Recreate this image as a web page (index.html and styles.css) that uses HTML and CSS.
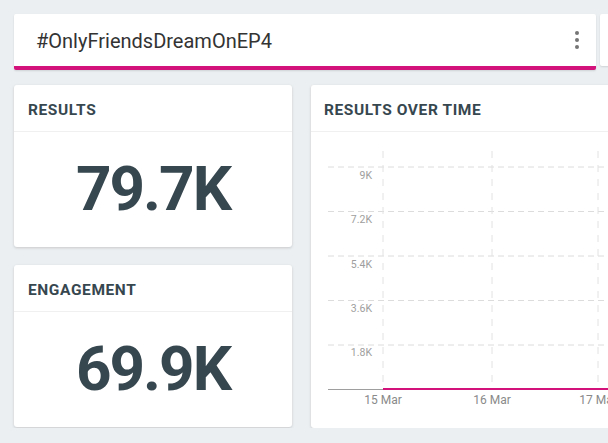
FILE: index.html
```html
<!DOCTYPE html>
<html>
    <head>
        <title>Hashtag Dashboard</title>
        <meta charset="UTF-8">
        <meta name="viewport" content="width=device-width, initial-scale=1.0">
        <link rel="stylesheet" href="styles.css">
    </head>
    <body>
        <div class="page">
            <div class="tabs">
                <div class="tab active">
                    <span class="tab-title">#OnlyFriendsDreamOnEP4</span>
                    <span class="kebab"><i></i><i></i><i></i></span>
                </div>
                <div class="tab"></div>
            </div>

            <div class="board">
                <div class="stats">
                    <div class="card">
                        <div class="card-head">RESULTS</div>
                        <div class="big-number">79.7K</div>
                    </div>
                    <div class="card">
                        <div class="card-head">ENGAGEMENT</div>
                        <div class="big-number">69.9K</div>
                    </div>
                </div>

                <div class="card chart-card">
                    <div class="card-head">RESULTS OVER TIME</div>
                    <svg class="chart" width="320" height="295" viewBox="0 0 320 295">
                        <!-- horizontal grid -->
                        <g class="grid">
                            <line x1="17" y1="35" x2="320" y2="35"/>
                            <line x1="17" y1="79.5" x2="320" y2="79.5"/>
                            <line x1="17" y1="124" x2="320" y2="124"/>
                            <line x1="17" y1="168.5" x2="320" y2="168.5"/>
                            <line x1="17" y1="213" x2="320" y2="213"/>
                        </g>
                        <!-- vertical grid -->
                        <g class="grid vertical">
                            <line x1="72" y1="19" x2="72" y2="257"/>
                            <line x1="181" y1="19" x2="181" y2="257"/>
                            <line x1="287" y1="19" x2="287" y2="257"/>
                        </g>
                        <line class="axis" x1="17" y1="257.5" x2="72" y2="257.5"/>
                        <line class="series" x1="72" y1="257" x2="320" y2="257"/>
                        <g class="y-labels">
                            <text x="61" y="47">9K</text>
                            <text x="61" y="91">7.2K</text>
                            <text x="61" y="135.5">5.4K</text>
                            <text x="61" y="180">3.6K</text>
                            <text x="61" y="224">1.8K</text>
                        </g>
                        <g class="x-labels">
                            <text x="72" y="272">15 Mar</text>
                            <text x="181" y="272">16 Mar</text>
                            <text x="287" y="272">17 Mar</text>
                        </g>
                    </svg>
                </div>
            </div>
        </div>
    </body>
</html>
```

FILE: styles.css
```css
body
{
    margin: 0;
    background-color: #eceff1;
    font-family: Roboto, "Liberation Sans", sans-serif;
    color: #37474f;
    overflow: hidden;
}
.page
{
    padding: 14px 0 0 14px;
    width: 620px;
}
.tabs
{
    display: flex;
    gap: 4px;
}
.tab
{
    background-color: white;
    height: 52px;
    width: 80px;
    border-radius: 2px;
    box-shadow: 0 1px 2px rgba(0, 0, 0, 0.12);
}
.tab.active
{
    flex: none;
    border-bottom: 4px solid #d3127b;
    display: flex;
    align-items: center;
    justify-content: space-between;
    padding: 0 17px 0 22px;
    box-sizing: content-box;
    width: 543px;
}
.tab-title
{
    font-size: 20px;
    color: #333333;
    padding-top: 1px;
}
.kebab
{
    display: flex;
    flex-direction: column;
    gap: 3px;
}
.kebab i
{
    display: block;
    width: 4px;
    height: 4px;
    border-radius: 50%;
    background-color: #757575;
}
.board
{
    display: grid;
    grid-template-columns: 278px 320px;
    column-gap: 19px;
    margin-top: 15px;
}
.stats
{
    display: flex;
    flex-direction: column;
    gap: 18px;
}
.card
{
    background-color: white;
    border-radius: 3px;
    box-shadow: 0 1px 3px rgba(0, 0, 0, 0.16);
    height: 162px;
    display: flex;
    flex-direction: column;
}
.card-head
{
    height: 46px;
    line-height: 50px;
    border-bottom: 1px solid #f0f0f0;
    padding-left: 14px;
    font-size: 15.5px;
    letter-spacing: 0.6px;
    font-weight: bold;
    color: #37474f;
}
.big-number
{
    flex: 1;
    display: flex;
    align-items: center;
    justify-content: center;
    font-size: 62px;
    letter-spacing: -2px;
    font-weight: bold;
    padding-bottom: 3px;
}
.chart-card
{
    height: 343px;
}
.chart-card .card-head
{
    padding-left: 13px;
}
.chart
{
    display: block;
}
.grid line
{
    stroke: #dcdcdc;
    stroke-width: 1;
    stroke-dasharray: 6 4;
}
.grid.vertical line
{
    stroke: #e2e2e2;
    stroke-dasharray: 7 7;
}
.axis
{
    stroke: #9e9e9e;
    stroke-width: 1;
}
.series
{
    stroke: #d3127b;
    stroke-width: 2;
}
.y-labels text
{
    font-size: 10.5px;
    fill: #9e9e9e;
    text-anchor: end;
}
.x-labels text
{
    font-size: 12px;
    fill: #8a8a8a;
    text-anchor: middle;
}
```
